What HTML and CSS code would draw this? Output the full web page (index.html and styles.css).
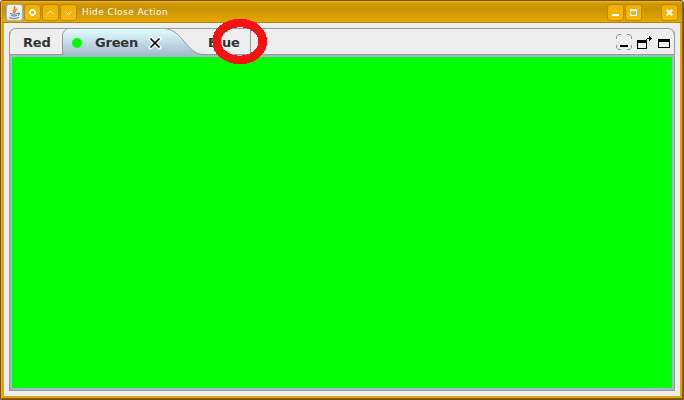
FILE: index.html
```html
<!DOCTYPE html>
<html lang="en">
<head>
<meta charset="utf-8">
<title>Hide Close Action</title>
<link rel="stylesheet" href="styles.css">
</head>
<body>
<div class="window">
  <header class="titlebar">
    <span class="app-icon"><svg width="15" height="15" viewBox="0 0 15 15" fill="none"><path d="M7.500 8C4 5.500 9 4.500 7.500 1M8.500 7.500C7 6 9 5 10 4" stroke="#ef8418" stroke-width="1.400"/><path d="M3 8.500Q7 10 11 8.500M4 10.500Q7 11.500 10 10.500M2 12.500Q7 14.500 12 12.500M11 8Q14 8 11 10.500" stroke="#56809c" stroke-width="1.100"/></svg></span>
    <span class="btn"><svg width="15" height="15" viewBox="0 0 15 15" shape-rendering="crispEdges"><path fill="#fff" fill-rule="evenodd" d="M6 4h3v1h1v1h1v3h-1v1H9v1H6v-1H5V9H4V6h1V5h1zM6 6v3h3V6z"/></svg></span>
    <span class="btn"><svg width="15" height="15" viewBox="0 0 15 15"><path d="M4.500 9l3-3 3 3" fill="none" stroke="#fff"/></svg></span>
    <span class="btn"><svg width="15" height="15" viewBox="0 0 15 15"><path d="M4.500 6.500l3 3 3-3" fill="none" stroke="#fff"/></svg></span>
    <span class="caption">Hide Close Action</span>
    <span class="btn"><svg width="15" height="15" viewBox="0 0 15 15"><path d="M4 9h7v2H4z" fill="#fff"/></svg></span>
    <span class="btn"><svg width="15" height="15" viewBox="0 0 15 15"><path fill="#fff" fill-rule="evenodd" d="M4 4h7v7H4zM5 6v4h5V6z"/></svg></span>
    <span class="btn close"><svg width="15" height="15" viewBox="0 0 15 15"><path d="M4.700 4.700l5.600 5.600M10.300 4.700l-5.600 5.600" stroke="#fff" stroke-width="2.200"/></svg></span>
  </header>
  <main class="content">
    <section class="station">
      <nav class="tabs">
        <span class="tab red">Red</span>
        <span class="tab green">
          <svg class="shape" width="145" height="28" viewBox="0 0 145 28"><defs><linearGradient id="tab-fill" x1="0" y1="0" x2="0" y2="1"><stop offset="0" stop-color="#e2ffff"/><stop offset="1" stop-color="#a3b8cc"/></linearGradient></defs><path d="M0 28V6.500L1.500 3.500 3.500 1.500 6 .5H101C121 .5 124 26.500 142 26.500V28z" fill="url(#tab-fill)"/><path d="M.5 27V6.500L1.500 4 4 1.500 6 .5H101C121 .5 124 26.500 142 26.500H145" fill="none" stroke="#999"/></svg>
          <i class="dot"></i><span class="label">Green</span>
          <svg class="x" width="14" height="14" viewBox="0 0 14 14"><path d="M2.500 2.500l9 9M11.500 2.500l-9 9" stroke="#fff" stroke-opacity=".75" stroke-width="4.500" stroke-linecap="round"/><path d="M2.500 2.500l9 9M11.500 2.500l-9 9" stroke="#000" stroke-width="1.600"/></svg>
        </span>
        <span class="tab blue">Blue</span>
        <span class="actions">
          <svg width="16" height="16" viewBox="0 0 16 16" shape-rendering="crispEdges"><path d="M.5 5V2.500L2.500.5H5M11 .5h2.500l2 2V5M15.500 11v2.500l-2 2H11M5 15.500H2.500l-2-2V11" fill="none" stroke="#999"/><path d="M4 11h8v2H4z"/></svg>
          <svg width="15" height="16" viewBox="0 0 15 16" shape-rendering="crispEdges"><path fill-rule="evenodd" d="M0 6h10v9H0zM1 9v5h8V9z"/><path d="M8 7V6h1V5h1V4h2V2h1v1h1v1h1v1h-1v1h-1v1h-1V5h-2v1H9v1z"/></svg>
          <svg width="12" height="16" viewBox="0 0 12 16" shape-rendering="crispEdges"><path fill-rule="evenodd" d="M0 5h12v9H0zM1 8v5h10V8z"/></svg>
        </span>
      </nav>
      <div class="panel"></div>
    </section>
  </main>
  <svg class="ring" width="58" height="48" viewBox="0 0 58 48"><ellipse cx="28.700" cy="23.500" rx="23" ry="18.500" fill="none" stroke="#ff0f0f" stroke-width="8.600" shape-rendering="crispEdges"/></svg>
</div>
</body>
</html>
```
FILE: styles.css
```css
* { box-sizing: border-box; }
body { margin: 0; background: #fff; overflow: hidden; }
.window {
  position: relative;
  display: flex;
  flex-direction: column;
  width: 684px;
  height: 400px;
  padding: 0 3px 3px;
  border: 1px solid #775300;
  border-radius: 3px 3px 0 0;
  background: #e2a500;
  box-shadow: inset 1px 1px #f2b600, inset -1px -1px #8a6000;
}
.titlebar {
  flex: none;
  display: flex;
  align-items: flex-start;
  gap: 1px;
  height: 22px;
  margin: 0 -2px;
  padding: 3px 4px 0 4px;
  border-bottom: 1px solid #b88300;
  background: linear-gradient(#f4bb13 0, #d49b00 2px, #c99200 8px, #e2a600 20px);
}
.app-icon, .btn {
  flex: none;
  width: 17px;
  height: 17px;
  border: 1px solid #bd8700;
  border-radius: 3px;
  background: linear-gradient(#efaf00, #f8b900);
}
.app-icon { background: #eeeeec; border-color: #a8afae; }
.btn svg, .app-icon svg { display: block; }
.caption {
  flex: 1;
  padding-left: 4px;
  color: #fff;
  font: 9px/17px "DejaVu Sans", sans-serif;
  letter-spacing: .42px;
  white-space: nowrap;
}
.close { margin-left: 18px; }
.content {
  flex: 1;
  min-height: 0;
  padding: 5px;
  background: #eee;
}
.station {
  display: flex;
  flex-direction: column;
  height: 100%;
  border: solid #999;
  border-width: 0 1px 1px;
  border-radius: 7px 7px 0 0;
}
.tabs {
  flex: none;
  display: flex;
  height: 27px;
  margin: 0 -1px;
  border: 1px solid #999;
  border-radius: 7px 7px 0 0;
  font: bold 13px/27px "DejaVu Sans", sans-serif;
  letter-spacing: -.2px;
  color: #333;
}
.tab { position: relative; flex: none; height: 25px; }
.red { width: 52px; padding-left: 13px; }
.green { width: 139px; display: flex; align-items: center; padding-left: 10px; }
.shape { position: absolute; left: 0; top: -1px; }
.dot { position: relative; width: 10px; height: 10px; margin-top: 2px; border-radius: 50%; background: #0f0; }
.label { position: relative; margin-left: 13px; width: 53px; padding-top: 2px; }
.x { position: relative; margin-top: 2px; }
.blue { width: 50px; padding-left: 7px; border-right: 1px solid #999; }
.actions { display: flex; gap: 5px; margin-left: auto; padding: 5px 4px 0 0; }
.actions svg:last-child { margin-left: 1px; }
.panel { flex: 1; border: 2px solid #a3b8cc; background: #0f0; }
.ring { position: absolute; left: 210px; top: 17px; }
```
